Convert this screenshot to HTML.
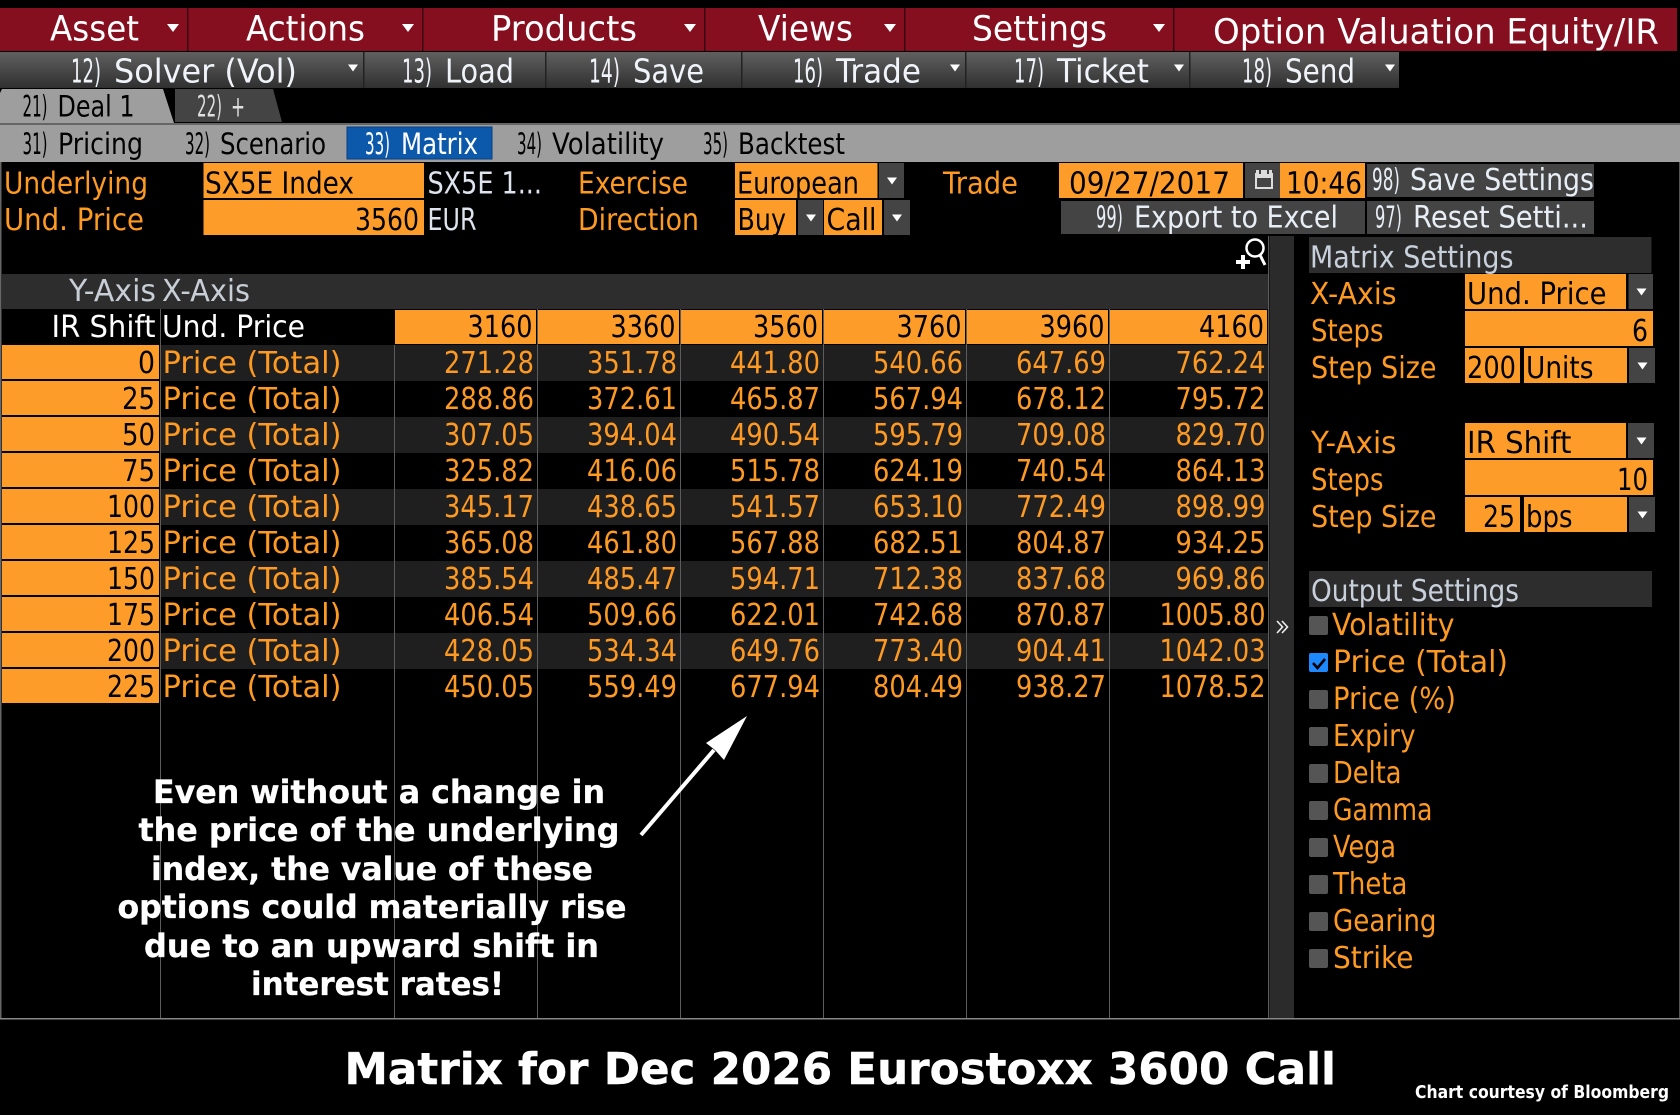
<!DOCTYPE html>
<html lang="en"><head><meta charset="utf-8"><title>Matrix</title>
<style>
html,body{margin:0;padding:0;background:#000;width:1680px;height:1115px;overflow:hidden}
svg{display:block}
text{font-family:"DejaVu Sans","Liberation Sans",sans-serif;white-space:pre}
</style></head><body>
<svg xmlns="http://www.w3.org/2000/svg" width="1680" height="1115" viewBox="0 0 1680 1115">
<defs>
<linearGradient id="g" x1="0" y1="0" x2="0" y2="1"><stop offset="0" stop-color="#606060"/><stop offset="1" stop-color="#303030"/></linearGradient>
<polygon id="a" points="-6,-4 6,-4 0,4" fill="#fff"/>
<polygon id="b" points="-5,-3.5 5,-3.5 0,3.5" fill="#fff"/>
</defs>
<rect width="1680" height="1115" fill="#000"/>

<!-- Row 1 -->
<rect x="0" y="8" width="1677" height="43" fill="#850e1f"/>
<g fill="#3a0a12"><rect x="187" y="8" width="1.5" height="43"/><rect x="422" y="8" width="1.5" height="43"/><rect x="704" y="8" width="1.5" height="43"/><rect x="904" y="8" width="1.5" height="43"/><rect x="1173" y="8" width="1.5" height="43"/></g>
<g fill="#fff" font-size="35">
<text x="50" y="40.7" textLength="89" lengthAdjust="spacingAndGlyphs">Asset</text>
<text x="246" y="40.7" textLength="119" lengthAdjust="spacingAndGlyphs">Actions</text>
<text x="491" y="40.7" textLength="146" lengthAdjust="spacingAndGlyphs">Products</text>
<text x="758" y="40.7" textLength="95" lengthAdjust="spacingAndGlyphs">Views</text>
<text x="972" y="40.7" textLength="135" lengthAdjust="spacingAndGlyphs">Settings</text>
<text x="1213" y="43.3" textLength="446" lengthAdjust="spacingAndGlyphs">Option Valuation Equity/IR</text>
</g>
<use href="#a" x="173" y="28"/><use href="#a" x="408" y="28"/><use href="#a" x="690" y="28"/><use href="#a" x="890" y="28"/><use href="#a" x="1159" y="28"/>

<!-- Row 2 -->
<rect x="0" y="52" width="1399" height="36" fill="url(#g)"/>
<g fill="#222"><rect x="363" y="52" width="1.5" height="36"/><rect x="545" y="52" width="1.5" height="36"/><rect x="741" y="52" width="1.5" height="36"/><rect x="965" y="52" width="1.5" height="36"/><rect x="1189" y="52" width="1.5" height="36"/></g>
<g fill="#f0f4fa" font-size="33">
<text x="71" y="82.5" textLength="30" lengthAdjust="spacingAndGlyphs">12)</text>
<text x="114" y="82.5" textLength="183" lengthAdjust="spacingAndGlyphs">Solver (Vol)</text>
<text x="402" y="82.5" textLength="30" lengthAdjust="spacingAndGlyphs">13)</text>
<text x="445" y="82.5" textLength="69" lengthAdjust="spacingAndGlyphs">Load</text>
<text x="589" y="82.5" textLength="31" lengthAdjust="spacingAndGlyphs">14)</text>
<text x="633" y="82.5" textLength="71" lengthAdjust="spacingAndGlyphs">Save</text>
<text x="793" y="82.5" textLength="30" lengthAdjust="spacingAndGlyphs">16)</text>
<text x="836" y="82.5" textLength="85" lengthAdjust="spacingAndGlyphs">Trade</text>
<text x="1014" y="82.5" textLength="30" lengthAdjust="spacingAndGlyphs">17)</text>
<text x="1057" y="82.5" textLength="92" lengthAdjust="spacingAndGlyphs">Ticket</text>
<text x="1242" y="82.5" textLength="30" lengthAdjust="spacingAndGlyphs">18)</text>
<text x="1285" y="82.5" textLength="70" lengthAdjust="spacingAndGlyphs">Send</text>
</g>
<use href="#b" x="353" y="68"/><use href="#b" x="955" y="68"/><use href="#b" x="1179" y="68"/><use href="#b" x="1390" y="68"/>

<!-- Tabs -->
<polygon points="175,89 273,89 282,122 175,122" fill="#444"/>
<polygon points="2,89 163,89 174,123 0,123 0,93" fill="#9e9e9e"/>
<g font-size="29" fill="#000">
<text x="22.5" y="116.7" textLength="25" lengthAdjust="spacingAndGlyphs">21)</text>
<text x="57.5" y="116.7" textLength="77" lengthAdjust="spacingAndGlyphs">Deal 1</text>
</g>
<g font-size="29" fill="#e0e0e0">
<text x="197" y="116.7" textLength="25" lengthAdjust="spacingAndGlyphs">22)</text>
<text x="231" y="116.7" textLength="14" lengthAdjust="spacingAndGlyphs">+</text>
</g>

<!-- Row 4 -->
<rect x="0" y="123" width="1680" height="2" fill="#666"/>
<rect x="0" y="125" width="1680" height="37" fill="#9e9e9e"/>
<rect x="347" y="127" width="145" height="32" fill="#0c59ab" stroke="#0a3f80" stroke-width="1"/>
<g font-size="29" fill="#000">
<text x="22.5" y="154" textLength="25" lengthAdjust="spacingAndGlyphs">31)</text>
<text x="58" y="154" textLength="85" lengthAdjust="spacingAndGlyphs">Pricing</text>
<text x="185" y="154" textLength="25" lengthAdjust="spacingAndGlyphs">32)</text>
<text x="220" y="154" textLength="106" lengthAdjust="spacingAndGlyphs">Scenario</text>
<text x="517" y="154" textLength="25" lengthAdjust="spacingAndGlyphs">34)</text>
<text x="552" y="154" textLength="112" lengthAdjust="spacingAndGlyphs">Volatility</text>
<text x="703" y="154" textLength="25" lengthAdjust="spacingAndGlyphs">35)</text>
<text x="738" y="154" textLength="107" lengthAdjust="spacingAndGlyphs">Backtest</text>
</g>
<g font-size="29" fill="#fff">
<text x="365" y="154" textLength="25" lengthAdjust="spacingAndGlyphs">33)</text>
<text x="401" y="154" textLength="77" lengthAdjust="spacingAndGlyphs">Matrix</text>
</g>

<!-- Input rows -->
<g fill="#fe9c2a">
<rect x="203.5" y="163" width="220.5" height="35"/><rect x="203.5" y="200" width="220.5" height="35"/>
<rect x="735" y="163" width="142.5" height="35"/><rect x="735" y="200" width="61" height="35"/><rect x="824" y="200" width="58" height="35"/>
<rect x="1059" y="163" width="184" height="35"/><rect x="1280" y="163" width="85" height="35"/>
</g>
<g fill="#444">
<rect x="879" y="163" width="25" height="35"/><rect x="798" y="200" width="25" height="35"/><rect x="884" y="200" width="26" height="35"/>
<rect x="1245" y="163" width="35" height="35"/><rect x="1367" y="164" width="227" height="33"/><rect x="1061" y="201" width="304" height="33"/><rect x="1367" y="201" width="227" height="33"/>
</g>
<use href="#b" x="892" y="181"/><use href="#b" x="811" y="218"/><use href="#b" x="897" y="218"/>
<rect x="1256" y="174" width="16" height="14" fill="none" stroke="#ddd" stroke-width="2"/>
<rect x="1256" y="170" width="16" height="8" fill="#ddd"/><rect x="1259" y="170" width="2" height="4" fill="#444"/><rect x="1267" y="170" width="2" height="4" fill="#444"/>
<g font-size="30" fill="#fe9a22">
<text x="4" y="193.700" textLength="144" lengthAdjust="spacingAndGlyphs">Underlying</text>
<text x="4" y="230" textLength="140" lengthAdjust="spacingAndGlyphs">Und. Price</text>
<text x="578" y="193.700" textLength="110" lengthAdjust="spacingAndGlyphs">Exercise</text>
<text x="578" y="230" textLength="121" lengthAdjust="spacingAndGlyphs">Direction</text>
<text x="943" y="193.700" textLength="75" lengthAdjust="spacingAndGlyphs">Trade</text>
</g>
<g font-size="30" fill="#000">
<text x="205" y="193.700" textLength="149" lengthAdjust="spacingAndGlyphs">SX5E Index</text>
<text x="355" y="230" textLength="64" lengthAdjust="spacingAndGlyphs">3560</text>
<text x="737" y="193.700" textLength="122" lengthAdjust="spacingAndGlyphs">European</text>
<text x="737.5" y="230" textLength="48.500" lengthAdjust="spacingAndGlyphs">Buy</text>
<text x="826.500" y="230" textLength="50" lengthAdjust="spacingAndGlyphs">Call</text>
<text x="1069" y="193.700" textLength="161" lengthAdjust="spacingAndGlyphs">09/27/2017</text>
<text x="1286" y="193.700" textLength="76" lengthAdjust="spacingAndGlyphs">10:46</text>
</g>
<g font-size="30" fill="#dde4ee">
<text x="427.500" y="193.700" textLength="114.500" lengthAdjust="spacingAndGlyphs">SX5E 1...</text>
<text x="427.500" y="230" textLength="49" lengthAdjust="spacingAndGlyphs">EUR</text>
</g>
<g font-size="30" fill="#e8eef6">
<text x="1372" y="190" textLength="28" lengthAdjust="spacingAndGlyphs">98)</text>
<text x="1410" y="190" textLength="184" lengthAdjust="spacingAndGlyphs">Save Settings</text>
<text x="1096" y="227.700" textLength="27" lengthAdjust="spacingAndGlyphs">99)</text>
<text x="1134" y="227.700" textLength="204" lengthAdjust="spacingAndGlyphs">Export to Excel</text>
<text x="1375" y="227.700" textLength="27" lengthAdjust="spacingAndGlyphs">97)</text>
<text x="1413" y="227.700" textLength="175" lengthAdjust="spacingAndGlyphs">Reset Setti...</text>
</g>

<!-- Magnifier -->
<circle cx="1255" cy="248" r="8.500" fill="none" stroke="#fff" stroke-width="2.500"/>
<line x1="1260" y1="255" x2="1265" y2="265" stroke="#fff" stroke-width="3"/>
<path d="M1236 262H1250M1243 255V269" stroke="#fff" stroke-width="4" fill="none"/>

<!-- Table -->
<rect x="2" y="274" width="1267" height="35" fill="#2d2d2d"/>
<g fill="#1f1f1f">
<rect x="160" y="345" width="1108" height="36"/><rect x="160" y="417" width="1108" height="36"/><rect x="160" y="489" width="1108" height="36"/><rect x="160" y="561" width="1108" height="36"/><rect x="160" y="633" width="1108" height="36"/>
</g>
<g fill="#fe9c2a">
<rect x="395" y="310" width="141" height="34"/><rect x="538" y="310" width="141" height="34"/><rect x="681" y="310" width="141" height="34"/><rect x="824" y="310" width="141" height="34"/><rect x="967" y="310" width="141" height="34"/><rect x="1109.5" y="310" width="157.5" height="34"/>
<rect x="2" y="345" width="157" height="34"/><rect x="2" y="381" width="157" height="34"/><rect x="2" y="417" width="157" height="34"/><rect x="2" y="453" width="157" height="34"/><rect x="2" y="489" width="157" height="34"/><rect x="2" y="525" width="157" height="34"/><rect x="2" y="561" width="157" height="34"/><rect x="2" y="597" width="157" height="34"/><rect x="2" y="633" width="157" height="34"/><rect x="2" y="669" width="157" height="34"/>
</g>
<g fill="#5c5c5c">
<rect x="160" y="309" width="1" height="709"/><rect x="394" y="345" width="1" height="673"/><rect x="537" y="309" width="1" height="709"/><rect x="680" y="309" width="1" height="709"/><rect x="823" y="309" width="1" height="709"/><rect x="966" y="309" width="1" height="709"/><rect x="1109" y="309" width="1" height="709"/><rect x="1268" y="236" width="1" height="782"/>
</g>
<rect x="0" y="162" width="1.5" height="857" fill="#666"/><rect x="1679" y="162" width="1" height="857" fill="#555"/>
<rect x="0" y="1018" width="1680" height="1.5" fill="#888"/>
<rect x="1269.5" y="236" width="24.500" height="782" fill="#2b2b2b"/>
<path d="M1277 621l5.500 6l-5.500 6M1282 621l5.500 6l-5.500 6" fill="none" stroke="#eee" stroke-width="1.600"/>

<g font-size="30" fill="#c8ced6">
<text x="69" y="301" textLength="87" lengthAdjust="spacingAndGlyphs">Y-Axis</text>
<text x="162" y="301" textLength="88" lengthAdjust="spacingAndGlyphs">X-Axis</text>
</g>
<g font-size="30" fill="#fff">
<text x="51.500" y="337" textLength="104" lengthAdjust="spacingAndGlyphs">IR Shift</text>
<text x="162" y="337" textLength="143" lengthAdjust="spacingAndGlyphs">Und. Price</text>
</g>
<g font-size="30" fill="#000">
<text x="467.500" y="337" textLength="65" lengthAdjust="spacingAndGlyphs">3160</text>
<text x="610.500" y="337" textLength="65" lengthAdjust="spacingAndGlyphs">3360</text>
<text x="753" y="337" textLength="65" lengthAdjust="spacingAndGlyphs">3560</text>
<text x="896.500" y="337" textLength="65" lengthAdjust="spacingAndGlyphs">3760</text>
<text x="1039.500" y="337" textLength="65" lengthAdjust="spacingAndGlyphs">3960</text>
<text x="1199" y="337" textLength="65" lengthAdjust="spacingAndGlyphs">4160</text>
<text x="138" y="373" textLength="17" lengthAdjust="spacingAndGlyphs">0</text>
<text x="122" y="409" textLength="33" lengthAdjust="spacingAndGlyphs">25</text>
<text x="122" y="445" textLength="33" lengthAdjust="spacingAndGlyphs">50</text>
<text x="122" y="481" textLength="33" lengthAdjust="spacingAndGlyphs">75</text>
<text x="107" y="517" textLength="48" lengthAdjust="spacingAndGlyphs">100</text>
<text x="107" y="553" textLength="48" lengthAdjust="spacingAndGlyphs">125</text>
<text x="107" y="589" textLength="48" lengthAdjust="spacingAndGlyphs">150</text>
<text x="107" y="625" textLength="48" lengthAdjust="spacingAndGlyphs">175</text>
<text x="107" y="661" textLength="48" lengthAdjust="spacingAndGlyphs">200</text>
<text x="107" y="697" textLength="48" lengthAdjust="spacingAndGlyphs">225</text>
</g>
<g font-size="30" fill="#fe9a22">
<text x="162.500" y="373" textLength="179" lengthAdjust="spacingAndGlyphs">Price (Total)</text>
<text x="444" y="373" textLength="90" lengthAdjust="spacingAndGlyphs">271.28</text>
<text x="587" y="373" textLength="90" lengthAdjust="spacingAndGlyphs">351.78</text>
<text x="730" y="373" textLength="90" lengthAdjust="spacingAndGlyphs">441.80</text>
<text x="873" y="373" textLength="90" lengthAdjust="spacingAndGlyphs">540.66</text>
<text x="1016" y="373" textLength="90" lengthAdjust="spacingAndGlyphs">647.69</text>
<text x="1175.500" y="373" textLength="90" lengthAdjust="spacingAndGlyphs">762.24</text>

<text x="162.500" y="409" textLength="179" lengthAdjust="spacingAndGlyphs">Price (Total)</text>
<text x="444" y="409" textLength="90" lengthAdjust="spacingAndGlyphs">288.86</text>
<text x="587" y="409" textLength="90" lengthAdjust="spacingAndGlyphs">372.61</text>
<text x="730" y="409" textLength="90" lengthAdjust="spacingAndGlyphs">465.87</text>
<text x="873" y="409" textLength="90" lengthAdjust="spacingAndGlyphs">567.94</text>
<text x="1016" y="409" textLength="90" lengthAdjust="spacingAndGlyphs">678.12</text>
<text x="1175.500" y="409" textLength="90" lengthAdjust="spacingAndGlyphs">795.72</text>

<text x="162.500" y="445" textLength="179" lengthAdjust="spacingAndGlyphs">Price (Total)</text>
<text x="444" y="445" textLength="90" lengthAdjust="spacingAndGlyphs">307.05</text>
<text x="587" y="445" textLength="90" lengthAdjust="spacingAndGlyphs">394.04</text>
<text x="730" y="445" textLength="90" lengthAdjust="spacingAndGlyphs">490.54</text>
<text x="873" y="445" textLength="90" lengthAdjust="spacingAndGlyphs">595.79</text>
<text x="1016" y="445" textLength="90" lengthAdjust="spacingAndGlyphs">709.08</text>
<text x="1175.500" y="445" textLength="90" lengthAdjust="spacingAndGlyphs">829.70</text>

<text x="162.500" y="481" textLength="179" lengthAdjust="spacingAndGlyphs">Price (Total)</text>
<text x="444" y="481" textLength="90" lengthAdjust="spacingAndGlyphs">325.82</text>
<text x="587" y="481" textLength="90" lengthAdjust="spacingAndGlyphs">416.06</text>
<text x="730" y="481" textLength="90" lengthAdjust="spacingAndGlyphs">515.78</text>
<text x="873" y="481" textLength="90" lengthAdjust="spacingAndGlyphs">624.19</text>
<text x="1016" y="481" textLength="90" lengthAdjust="spacingAndGlyphs">740.54</text>
<text x="1175.500" y="481" textLength="90" lengthAdjust="spacingAndGlyphs">864.13</text>

<text x="162.500" y="517" textLength="179" lengthAdjust="spacingAndGlyphs">Price (Total)</text>
<text x="444" y="517" textLength="90" lengthAdjust="spacingAndGlyphs">345.17</text>
<text x="587" y="517" textLength="90" lengthAdjust="spacingAndGlyphs">438.65</text>
<text x="730" y="517" textLength="90" lengthAdjust="spacingAndGlyphs">541.57</text>
<text x="873" y="517" textLength="90" lengthAdjust="spacingAndGlyphs">653.10</text>
<text x="1016" y="517" textLength="90" lengthAdjust="spacingAndGlyphs">772.49</text>
<text x="1175.500" y="517" textLength="90" lengthAdjust="spacingAndGlyphs">898.99</text>

<text x="162.500" y="553" textLength="179" lengthAdjust="spacingAndGlyphs">Price (Total)</text>
<text x="444" y="553" textLength="90" lengthAdjust="spacingAndGlyphs">365.08</text>
<text x="587" y="553" textLength="90" lengthAdjust="spacingAndGlyphs">461.80</text>
<text x="730" y="553" textLength="90" lengthAdjust="spacingAndGlyphs">567.88</text>
<text x="873" y="553" textLength="90" lengthAdjust="spacingAndGlyphs">682.51</text>
<text x="1016" y="553" textLength="90" lengthAdjust="spacingAndGlyphs">804.87</text>
<text x="1175.500" y="553" textLength="90" lengthAdjust="spacingAndGlyphs">934.25</text>

<text x="162.500" y="589" textLength="179" lengthAdjust="spacingAndGlyphs">Price (Total)</text>
<text x="444" y="589" textLength="90" lengthAdjust="spacingAndGlyphs">385.54</text>
<text x="587" y="589" textLength="90" lengthAdjust="spacingAndGlyphs">485.47</text>
<text x="730" y="589" textLength="90" lengthAdjust="spacingAndGlyphs">594.71</text>
<text x="873" y="589" textLength="90" lengthAdjust="spacingAndGlyphs">712.38</text>
<text x="1016" y="589" textLength="90" lengthAdjust="spacingAndGlyphs">837.68</text>
<text x="1175.500" y="589" textLength="90" lengthAdjust="spacingAndGlyphs">969.86</text>

<text x="162.500" y="625" textLength="179" lengthAdjust="spacingAndGlyphs">Price (Total)</text>
<text x="444" y="625" textLength="90" lengthAdjust="spacingAndGlyphs">406.54</text>
<text x="587" y="625" textLength="90" lengthAdjust="spacingAndGlyphs">509.66</text>
<text x="730" y="625" textLength="90" lengthAdjust="spacingAndGlyphs">622.01</text>
<text x="873" y="625" textLength="90" lengthAdjust="spacingAndGlyphs">742.68</text>
<text x="1016" y="625" textLength="90" lengthAdjust="spacingAndGlyphs">870.87</text>
<text x="1159.500" y="625" textLength="106" lengthAdjust="spacingAndGlyphs">1005.80</text>

<text x="162.500" y="661" textLength="179" lengthAdjust="spacingAndGlyphs">Price (Total)</text>
<text x="444" y="661" textLength="90" lengthAdjust="spacingAndGlyphs">428.05</text>
<text x="587" y="661" textLength="90" lengthAdjust="spacingAndGlyphs">534.34</text>
<text x="730" y="661" textLength="90" lengthAdjust="spacingAndGlyphs">649.76</text>
<text x="873" y="661" textLength="90" lengthAdjust="spacingAndGlyphs">773.40</text>
<text x="1016" y="661" textLength="90" lengthAdjust="spacingAndGlyphs">904.41</text>
<text x="1159.500" y="661" textLength="106" lengthAdjust="spacingAndGlyphs">1042.03</text>

<text x="162.500" y="697" textLength="179" lengthAdjust="spacingAndGlyphs">Price (Total)</text>
<text x="444" y="697" textLength="90" lengthAdjust="spacingAndGlyphs">450.05</text>
<text x="587" y="697" textLength="90" lengthAdjust="spacingAndGlyphs">559.49</text>
<text x="730" y="697" textLength="90" lengthAdjust="spacingAndGlyphs">677.94</text>
<text x="873" y="697" textLength="90" lengthAdjust="spacingAndGlyphs">804.49</text>
<text x="1016" y="697" textLength="90" lengthAdjust="spacingAndGlyphs">938.27</text>
<text x="1159.500" y="697" textLength="106" lengthAdjust="spacingAndGlyphs">1078.52</text>
</g>

<!-- Right panel -->
<rect x="1309" y="237" width="342.500" height="36" fill="#2d2d2d"/>
<rect x="1309" y="571" width="343" height="36" fill="#2d2d2d"/>
<g fill="#fe9c2a">
<rect x="1465" y="274" width="161" height="35"/><rect x="1465" y="311" width="188" height="35"/>
<rect x="1465" y="348" width="55" height="35"/><rect x="1524" y="348" width="103" height="35"/>
<rect x="1465" y="423" width="161" height="35"/><rect x="1465" y="460" width="188" height="35"/>
<rect x="1465" y="497" width="55" height="35"/><rect x="1524" y="497" width="103" height="35"/>
</g>
<g fill="#444">
<rect x="1628.500" y="274" width="24.500" height="35"/><rect x="1629" y="348" width="26" height="35"/><rect x="1628" y="423" width="26" height="35"/><rect x="1629" y="497" width="26" height="35"/>
</g>
<use href="#b" x="1641.500" y="292"/><use href="#b" x="1642.500" y="366"/><use href="#b" x="1641.500" y="441"/><use href="#b" x="1642.500" y="515"/>
<g font-size="30" fill="#c8d0dc">
<text x="1310" y="267.700" textLength="203.500" lengthAdjust="spacingAndGlyphs">Matrix Settings</text>
<text x="1311" y="601" textLength="208" lengthAdjust="spacingAndGlyphs">Output Settings</text>
</g>
<g font-size="30" fill="#fe9a22">
<text x="1310" y="304" textLength="86.500" lengthAdjust="spacingAndGlyphs">X-Axis</text>
<text x="1311" y="341" textLength="72.500" lengthAdjust="spacingAndGlyphs">Steps</text>
<text x="1311" y="378" textLength="125.500" lengthAdjust="spacingAndGlyphs">Step Size</text>
<text x="1311" y="453" textLength="85.500" lengthAdjust="spacingAndGlyphs">Y-Axis</text>
<text x="1311" y="490" textLength="72.500" lengthAdjust="spacingAndGlyphs">Steps</text>
<text x="1311" y="527" textLength="125.500" lengthAdjust="spacingAndGlyphs">Step Size</text>
<text x="1332" y="635" textLength="122.500" lengthAdjust="spacingAndGlyphs">Volatility</text>
<text x="1333" y="672" textLength="175" lengthAdjust="spacingAndGlyphs">Price (Total)</text>
<text x="1333" y="709" textLength="123" lengthAdjust="spacingAndGlyphs">Price (%)</text>
<text x="1333" y="746" textLength="82.500" lengthAdjust="spacingAndGlyphs">Expiry</text>
<text x="1333" y="783" textLength="68.500" lengthAdjust="spacingAndGlyphs">Delta</text>
<text x="1333" y="820" textLength="99.500" lengthAdjust="spacingAndGlyphs">Gamma</text>
<text x="1333" y="857" textLength="63" lengthAdjust="spacingAndGlyphs">Vega</text>
<text x="1333" y="894" textLength="74.500" lengthAdjust="spacingAndGlyphs">Theta</text>
<text x="1333" y="931" textLength="103.500" lengthAdjust="spacingAndGlyphs">Gearing</text>
<text x="1333" y="968" textLength="80.500" lengthAdjust="spacingAndGlyphs">Strike</text>
</g>
<g font-size="30" fill="#000">
<text x="1467" y="304" textLength="139.500" lengthAdjust="spacingAndGlyphs">Und. Price</text>
<text x="1632" y="341" textLength="16" lengthAdjust="spacingAndGlyphs">6</text>
<text x="1467" y="378" textLength="49" lengthAdjust="spacingAndGlyphs">200</text>
<text x="1526" y="378" textLength="67.500" lengthAdjust="spacingAndGlyphs">Units</text>
<text x="1467" y="453" textLength="104.500" lengthAdjust="spacingAndGlyphs">IR Shift</text>
<text x="1617" y="490" textLength="31" lengthAdjust="spacingAndGlyphs">10</text>
<text x="1483" y="527" textLength="32" lengthAdjust="spacingAndGlyphs">25</text>
<text x="1526" y="527" textLength="46.500" lengthAdjust="spacingAndGlyphs">bps</text>
</g>
<g fill="#555">
<rect x="1309" y="616" width="19" height="19" rx="2"/>
<rect x="1309" y="690" width="19" height="19" rx="2"/><rect x="1309" y="727" width="19" height="19" rx="2"/><rect x="1309" y="764" width="19" height="19" rx="2"/><rect x="1309" y="801" width="19" height="19" rx="2"/><rect x="1309" y="838" width="19" height="19" rx="2"/><rect x="1309" y="875" width="19" height="19" rx="2"/><rect x="1309" y="912" width="19" height="19" rx="2"/><rect x="1309" y="949" width="19" height="19" rx="2"/>
</g>
<rect x="1309" y="653" width="19" height="19" rx="2" fill="#1e88ff"/>
<path d="M1313 663l4.500 5l7.500-9" fill="none" stroke="#000" stroke-width="2.600"/>

<!-- Annotation -->
<g font-size="32" font-weight="bold" fill="#fff" stroke="#fff" stroke-width="0.300">
<text x="153" y="803" textLength="452" lengthAdjust="spacingAndGlyphs">Even without a change in</text>
<text x="138.500" y="841" textLength="481" lengthAdjust="spacingAndGlyphs">the price of the underlying</text>
<text x="151" y="880" textLength="442" lengthAdjust="spacingAndGlyphs">index, the value of these</text>
<text x="117.500" y="918" textLength="509" lengthAdjust="spacingAndGlyphs">options could materially rise</text>
<text x="144" y="957" textLength="455" lengthAdjust="spacingAndGlyphs">due to an upward shift in</text>
<text x="251" y="995" textLength="253" lengthAdjust="spacingAndGlyphs">interest rates!</text>
</g>
<line x1="641" y1="835" x2="714" y2="750" stroke="#fff" stroke-width="4"/>
<polygon points="747,716 724,760 715,750 706,743" fill="#fff"/>

<!-- Footer -->
<text x="344.500" y="1084" font-size="44" font-weight="bold" fill="#fff" stroke="#fff" stroke-width="0.400" textLength="991.500" lengthAdjust="spacingAndGlyphs">Matrix for Dec 2026 Eurostoxx 3600 Call</text>
<text x="1415" y="1098" font-size="18" font-weight="bold" fill="#fff" textLength="254" lengthAdjust="spacingAndGlyphs">Chart courtesy of Bloomberg</text>
</svg>
</body></html>
